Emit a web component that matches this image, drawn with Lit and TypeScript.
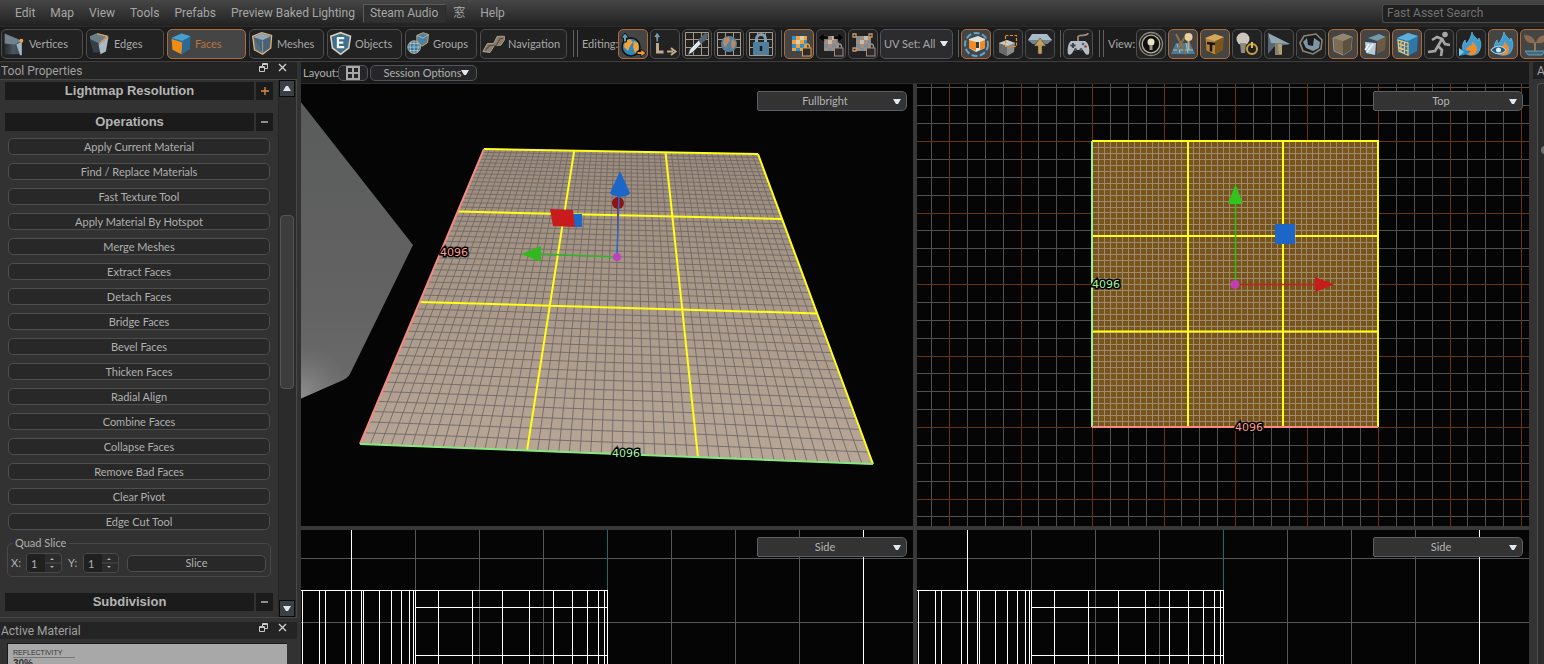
import { LitElement, html, css, svg } from "lit";
import { customElement, property } from "lit/decorators.js";

type Pt = [number, number];

/** Projective mapping from the unit square onto a quad (corners clockwise from top left). */
function projector(q: Pt[]) {
  const [[x0, y0], [x1, y1], [x2, y2], [x3, y3]] = q;
  const dx1 = x1 - x2, dx2 = x3 - x2, sx = x0 - x1 + x2 - x3;
  const dy1 = y1 - y2, dy2 = y3 - y2, sy = y0 - y1 + y2 - y3;
  const den = dx1 * dy2 - dx2 * dy1;
  const g = (sx * dy2 - dx2 * sy) / den;
  const h = (dx1 * sy - sx * dy1) / den;
  return (u: number, v: number): Pt => {
    const w = g * u + h * v + 1;
    return [
      ((x1 - x0 + g * x1) * u + (x3 - x0 + h * x3) * v + x0) / w,
      ((y1 - y0 + g * y1) * u + (y3 - y0 + h * y3) * v + y0) / w,
    ];
  };
}

const seg = (a: Pt, b: Pt) => `M${a[0].toFixed(2)} ${a[1].toFixed(2)}L${b[0].toFixed(2)} ${b[1].toFixed(2)}`;
const range = (n: number) => Array.from({ length: n }, (_, i) => i);

const cube = (left: string, right: string, top: string, edge: string) => svg`
  <path d="M5 9L15 5l9 3-1 13-8 5-9-4z" fill=${left} stroke=${edge} stroke-width="1"/>
  <path d="M15 12l9-4-1 13-8 5z" fill=${right}/>
  <path d="M5 9L15 5l9 3-9 4z" fill=${top}/>`;

const gridLines = svg`<path d="M3.500 3.500h23v23h-23zM11.500 3v24M19.500 3v24M3 10.500h24M3 18.500h24" fill="none" stroke="#a8988a"/>`;

const checker = (dim: boolean) => svg`
  <rect x="8" y="7" width="15" height="15" fill=${dim ? "#7a8d98" : "#2f8fd0"}/>
  <path d="M12 7h4v4h-4zM20 7h3v4h-3zM8 11h4v4H8zM16 11h4v4h-4zM12 15h4v4h-4zM20 15h3v4h-3zM8 19h4v3H8zM16 19h4v3h-4z" fill=${dim ? "#a68c78" : "#f0a23c"}/>
  <path d="M16 7h4v4h-4zM12 11h4v4h-4z" fill=${dim ? "#c0bcb4" : "#d8d0b0"}/>
  <path d="M20.500 19v-1.500a2.500 2.500 0 0 1 5 0V19" fill="none" stroke=${dim ? "#9a8f86" : "#d0a050"} stroke-width="1.300"/>
  <rect x="18.500" y="19" width="8.500" height="8" fill="#2c2a2a" stroke=${dim ? "#9a8f86" : "#d0a050"}/>`;

const flame = svg`
  <path d="M16 3c1 5 5 5 6 9l1-3c3 5 2 11-1 15-4 3-10 3-13 0-4-5-3-9 0-13l1 4c3-3 5-7 6-12z" fill="#3f9bd0" stroke="#7cc8ec" stroke-width=".600"/>
  <path d="M17 12c0 3 4 4 4 8 0 3-2 6-5 6s-6-2-6-5 3-3 4-5l1 1z" fill="#f28c28"/>`;

const icons: Record<string, unknown> = {
  vertices: svg`<defs><linearGradient id="vf"><stop offset="0" stop-color="#2b2b2b"/><stop offset=".500" stop-color="#4a5660"/><stop offset="1" stop-color="#3b4a56"/></linearGradient></defs>
    <path d="M3 5l19 7v15H3z" fill="url(#vf)"/><path d="M3 4l19 8-8 4-11-1z" fill="#71838f"/><path d="M16 16l6-3v15h-2z" fill="#9fb6c4"/><circle cx="21.500" cy="12" r="2.200" fill="#f0a050"/>`,
  edges: svg`<path d="M3 7L10 4l13 2-9 10H5z" fill="#6b7d89"/><path d="M3 10l11 5 1 10H7z" fill="#33404a"/><path d="M13 17L24 7l-3 17-6 3z" fill="#a9bac4"/><path d="M23 7L13 16M23 7L11 4" fill="none" stroke="#dfa167" stroke-width="1.500"/>`,
  faces: svg`<path d="M4 9l11-5 10 3-1 14-9 6-10-5z" fill="#2c6f9c"/><path d="M4 9l11-5 10 3-9 5z" fill="#4aa0cc"/><path d="M4 10l12 4-1 13-10-5z" fill="#f28c10"/><path d="M16 13l9-5-1 13-9 6z" fill="#2b6a94"/>`,
  meshes: svg`<path d="M3 7l10-4 11 3-1 14-9 7-9-5z" fill="#566f80" stroke="#e0b47c" stroke-width="1.500"/><path d="M4 8l10 4 9-5-1 13-8 5z" fill="#4c6272"/><path d="M4 8l9-4 10 3-9 4z" fill="#90a9b8"/><path d="M14 12v14" stroke="#8ea4b0"/>`,
  objects: svg`<path d="M3 7l11-4 11 4-2 13-9 7-9-7z" fill="#3c6f8c" stroke="#d8cdb8" stroke-width="1.800"/><path d="M18 9h-7v10h7M11 14h6" fill="none" stroke="#f2f2f2" stroke-width="2.400"/>`,
  groups: svg`<path d="M12 6l7-3 6 2-1 9-6 4-6-3z" fill="#4e82a0" stroke="#d8a870"/><path d="M12 6l7 3 6-4" fill="none" stroke="#9cc0d4"/><circle cx="9" cy="19" r="7" fill="#3c7a9c" stroke="#d8b890"/><path d="M9 12v14M2 19h14M4 15h10M4 23h10M6 13c-2 4-2 8 0 12M12 13c2 4 2 8 0 12" fill="none" stroke="#b8d0dc" stroke-width=".800"/>`,
  navigation: svg`<path d="M2 24l5-9h7l4-8h8v4l-4 6h-7l-5 8z" fill="#8a7c6c" stroke="#b3a491"/><path d="M5 22l5-5h7l4-7 4-1" fill="none" stroke="#564b40" stroke-width="1.200"/>`,
  world: svg`<circle cx="13" cy="18" r="9" fill="#2f86b8" stroke="#101010" stroke-width="1.500"/><path d="M7 12l5-2 3 3-3 4-2 5-4-4zM16 12l4 2 1 6-4 4-2-6z" fill="#f0a23c"/><path d="M7 4L3 9h2.500v4h3V9H11z" fill="#5f9fc0" stroke="#101010"/><path d="M28 24l-5-4v2.500h-4v3h4V28z" fill="#f09a30" stroke="#101010"/>`,
  local: svg`<path d="M7 3L3.500 8.500H6V13h2.500V8.500H11z" fill="#7d99aa" stroke="#111" stroke-width=".700"/><path d="M7.500 14v9h6" fill="none" stroke="#c0aa8e" stroke-width="3"/><path d="M17 22.500h6M21 19l4.500 3.500L21 26" fill="none" stroke="#c0aa8e" stroke-width="2"/>`,
  knife: svg`${gridLines}<path d="M6 26l2-6 9-9 3 3-9 9z" fill="#dfe7ec" stroke="#404a50" stroke-width=".800"/><path d="M16 11l7-7 3 1-1 5-6 5z" fill="#566570"/>`,
  gridWorld: svg`${gridLines}<circle cx="15" cy="15" r="8" fill="#55809c"/><path d="M10 9l5-1 1 4-3 3-1 4-3-4zM18 10l4 3-1 5-3 2-1-5z" fill="#b98a68"/>`,
  gridLock: svg`${gridLines}<path d="M10.500 14v-4a4.500 4.500 0 0 1 9 0v4" fill="none" stroke="#7fa0b4" stroke-width="3"/><rect x="7" y="13" width="16" height="13" rx="1" fill="#4f7f9c"/><path d="M15 17v5" stroke="#101820" stroke-width="2.500"/>`,
  texLock: checker(false),
  texScale: svg`${checker(true)}<path d="M2 8.500l6-5v3.500h4v3H8v3.500zM28 8.500l-6-5v3.500h-4v3h4v3.500z" fill="#060606" stroke="#4a4238" stroke-width=".500"/>`,
  texCorners: svg`${checker(true)}<path d="M5 5h3v3H5zM21 5h3v3h-3zM5 19h3v3H5z" fill="#161616" stroke="#c89a70" stroke-width="1.300"/>`,
  selectCube: svg`<circle cx="15.500" cy="15.500" r="11.500" fill="#3a5060" fill-opacity=".500" stroke="#62a4c4" stroke-width="2" stroke-dasharray="6 2.500"/><path d="M8 10l9-3 7 3v9l-9 4-7-4z" fill="#e2e2de"/><path d="M8 11l7 2v9l-7-3zM19 13l5-2v8l-5 2z" fill="#f28c20"/><path d="M15 13h3v6h-3z" fill="#3a3a3a"/>`,
  selectMarquee: svg`<path d="M6 14l8-3 8 3-1 9-7 4-8-4z" fill="#8c8c8c"/><path d="M6 14l8 3v10l-8-4z" fill="#6a6a6a"/><path d="M6 14l8-3 8 3-8 3z" fill="#c8c8c8"/><path d="M12.500 6.500h11v11h-11z" fill="none" stroke="#ee8c28" stroke-width="1.200" stroke-dasharray="3 1.500"/>`,
  dropArrow: svg`<path d="M3 11l4-6h15l5 6-5 4H8z" fill="#a9bbc6"/><path d="M3 11l5 4h14l5-4" fill="#6f8490"/><path d="M15 9l6 8h-4v8h-4v-8H9z" fill="#c0a060" stroke="#4b4028" stroke-width=".600"/>`,
  gamepad: svg`<path d="M15 12V8c0-3 10 0 10-4" fill="none" stroke="#a08c78" stroke-width="1.800"/><path d="M8 12h14c4 2 5 9 4 13-2 2-4 0-6-4h-9c-2 4-4 6-6 4-1-4 0-11 3-13z" fill="#b4bcc4"/><path d="M10 14v5M7.500 16.500h5" stroke="#39424a" stroke-width="1.800"/><circle cx="20" cy="15" r="1.300" fill="#3c6c90"/><circle cx="22.500" cy="17.500" r="1.300" fill="#a04030"/><circle cx="12.500" cy="20.500" r="1.500" fill="#485058"/><circle cx="18" cy="20.500" r="1.500" fill="#485058"/>`,
  bulbRing: svg`<circle cx="15" cy="15" r="11.500" fill="none" stroke="#8c8a80" stroke-width="1.300"/><circle cx="15" cy="15" r="8.800" fill="#101010" stroke="#b8b29c" stroke-width="1.300"/><circle cx="15" cy="13" r="3.500" fill="#ece2c4"/><path d="M13.500 16h3v5h-3z" fill="#9c9484"/>`,
  mapPins: svg`<path d="M3 25l5-11h14l5 11z" fill="#4a7c98"/><path d="M9 15l3 9M18 14l2 10M5 21h20" stroke="#9cc4d8" fill="none"/><path d="M8 5l10 20M16 9L9 23" stroke="#8c7048" stroke-width="2"/><circle cx="20.500" cy="8" r="4" fill="#eccf9c"/><path d="M20.500 12v9" stroke="#cfa870" stroke-width="2"/>`,
  toolCube: svg`${cube("#b5853a", "#7a5520", "#d0a860", "#4f3914")}<path d="M7 14l8 1M11 14.500v8" stroke="#17120a" stroke-width="2.500"/>`,
  bulbPower: svg`<circle cx="11" cy="10" r="6.500" fill="#c9c6bc"/><path d="M8 14h6l-1 10h-4z" fill="#8c8a84"/><circle cx="20" cy="20" r="5" fill="#202020" stroke="#c8a440" stroke-width="2"/><path d="M20 13v6" stroke="#e0bc50" stroke-width="2"/>`,
  camera: svg`<path d="M4 4l22 11-19 3z" fill="#8ca6b2"/><path d="M4 4v21l6-7 16-3-19-1z" fill="#566874"/><path d="M11 14h7v12h-7z" fill="#8a8064"/><path d="M14 15h4v10h-3z" fill="#b0a078"/>`,
  ring: svg`<path d="M4 14l4-7 12-2 6 6-1 9-8 5-10-3z" fill="#1b1b1b" stroke="#8e8474" stroke-width="1.600"/><path d="M7 13l4-4 1 7 5 1 1-8 6 4-1 6-6 3-7-3z" fill="#7d95a6"/>`,
  plainCube: cube("#7c6c56", "#5c5140", "#94866e", "#a49478"),
  paintCube: svg`<path d="M8 9l11-4 7 3-1 13-9 5-9-4z" fill="#36454f"/><path d="M8 9l11-4 7 3-9 4z" fill="#7499ac"/><path d="M17 12l9-4-1 13-8 4z" fill="#6e5a40"/><path d="M5 13l11 1-1 12-9-2z" fill="#b8ccd8"/><path d="M9 15l-4 6M13 15l-6 8" stroke="#f2f6f8" stroke-width="1.500"/>`,
  gridCube: svg`<path d="M5 9l11-5 10 3-1 15-9 5-10-4z" fill="#2c78a8"/><path d="M5 9l11-5 10 3-10 5z" fill="#5cb0dc"/><path d="M6 11l10 3v12L7 22zM9 12v11M12.500 13v12M6 14.500l10 3M6 18l10 4" fill="none" stroke="#f2c470" stroke-width="1.200"/>`,
  runner: svg`<circle cx="21" cy="5.500" r="2.800" fill="#a6a6a6"/><path d="M8 11l5-3 5 2-4 7 4 4-1 6M18 10l3 5 5 1M14 17l-3 5-7 1" fill="none" stroke="#a6a6a6" stroke-width="2.600"/>`,
  flameCone: svg`${flame}<path d="M3 20l12 2-3 3-9 2z" fill="#2c8cc4"/><path d="M3 19l5 4-5 4z" fill="#80c4e4"/>`,
  flameEye: svg`${flame}<path d="M3 21c4-5 11-5 15 0-4 5-11 5-15 0z" fill="#28566e" stroke="#a4d4ea" stroke-width="1.200"/><circle cx="10.500" cy="21" r="2.500" fill="#d8eef8"/>`,
  plant: svg`<path d="M5 22h20l-3 4H8z" fill="#3a6c84" stroke="#78acc4" stroke-width=".800"/><path d="M15 23V13" stroke="#8a8058" stroke-width="2"/><path d="M15 14C8 15 5 12 4 6c7 0 11 3 11 8zM16 14c1-5 4-8 11-8 0 6-4 9-11 8z" fill="#8c6c50"/>`,
};

const icon = (name: string) => html`<svg class="icon" viewBox="0 0 30 30" aria-hidden="true">${icons[name]}</svg>`;
const floatIcon = html`<svg class="glyph" viewBox="0 0 9 9" aria-hidden="true"><path d="M3.500 5V.500h5v5H6M3.500 1.500h5" fill="none" stroke="#c8c8c8"/><path d="M.500 3.500h5v5h-5zM.500 4.500h5" fill="none" stroke="#c8c8c8"/></svg>`;
const closeIcon = html`<svg class="glyph" viewBox="0 0 9 9" aria-hidden="true"><path d="M1 1l7 7M8 1L1 8" stroke="#d0d0d0" stroke-width="1.300"/></svg>`;
const caret = html`<svg class="caret" viewBox="0 0 8 5" aria-hidden="true"><path d="M0 0h8L5 5H3z" fill="#dfe8f0"/></svg>`;

const shared = css`
  *, *::before, *::after { box-sizing: border-box; }
  button, input, select { font: inherit; color: inherit; margin: 0; padding: 0; border-radius: 0; background: none; border: 0; outline: 0; }
  h2 { margin: 0; font: inherit; }
  svg { display: block; flex: none; }
  .caret { width: 8px; height: 5px; }
  .glyph { width: 9px; height: 9px; }
`;

@customElement("menu-bar")
class MenuBar extends LitElement {
  static styles = [shared, css`
    :host { display: block; }
    .bar { display: flex; align-items: center; height: 26px; padding-left: 8px; background: linear-gradient(#464646, #222); font: 12px/17px Roboto, "Noto Sans CJK JP", sans-serif; color: #a6a6a6; }
    .item { height: 19px; padding: 0 7px 0 6px; border: 1px solid transparent; white-space: nowrap; }
    .item.open { border-color: #5c5c5c; border-bottom-color: #2c2c2c; border-right-color: #2c2c2c; background: #303030; }
    .search { margin-left: auto; width: 162px; height: 19px; padding-left: 4px; border: 1px solid #4c4c4c; border-right: 0; border-radius: 3px 0 0 3px; background: #202020; }
    .search::placeholder { color: #707070; opacity: 1; }
  `];
  render() {
    const items = ["Edit", "Map", "View", "Tools", "Prefabs", "Preview Baked Lighting", "Steam Audio", "窓", "Help"];
    return html`<nav class="bar">
      ${items.map((t) => html`<button class="item ${t === "Steam Audio" ? "open" : ""}">${t}</button>`)}
      <input class="search" type="search" aria-label="Fast Asset Search" placeholder="Fast Asset Search" />
    </nav>`;
  }
}

@customElement("tool-bar")
class ToolBar extends LitElement {
  static styles = [shared, css`
    :host { display: block; }
    .bar { display: flex; align-items: center; gap: 2px; height: 36px; padding: 0 0 1px 1px; overflow: hidden; background: #1c1c1c; border-bottom: 1px solid #3e3e3e; border-top: 1px solid #2a2a2a; font: 11px/14px Lato, sans-serif; color: #a8a8a8; }
    .modes { display: grid; grid-template-columns: 82px 78px 79px 75px 75px 72px 87px; gap: 3px; flex: none; }
    .btn { display: flex; align-items: center; justify-content: center; height: 30px; border: 1px solid #4e4e50; border-radius: 5px; background: #222; flex: none; }
    .btn.on { background: #454545; border-color: #b06a36; }
    .mode { justify-content: flex-start; }
    .mode.on { color: #b87440; }
    .mode .icon { width: 27px; height: 27px; }
    .tool { width: 30px; }
    .tool .icon { width: 30px; height: 30px; }
    .handle { width: 5px; height: 27px; margin: 0 2px 0 4px; border: solid #606060; border-width: 0 1px; flex: none; }
    .sep { width: 1px; height: 27px; margin-left: 3px; background: #606060; flex: none; }
    .label { width: 34px; flex: none; }
    .label.short { width: 26px; }
    .uv { position: relative; display: flex; align-items: center; width: 73px; height: 30px; border: 1px solid #50545c; border-radius: 5px; background: #2c2c2e; flex: none; }
    .uv select { appearance: none; width: 100%; height: 100%; padding-left: 3px; }
    .uv .caret { position: absolute; right: 4px; pointer-events: none; }
  `];
  tools(names: string[], on: string[]) {
    return names.map((n) => n === "|" ? html`<span class="sep"></span>`
      : html`<button class="btn tool ${on.includes(n) ? "on" : ""}" aria-label=${n}>${icon(n)}</button>`);
  }
  render() {
    const modes = ["Vertices", "Edges", "Faces", "Meshes", "Objects", "Groups", "Navigation"];
    return html`<div class="bar">
      <div class="modes">${modes.map((m) => html`<button class="btn mode ${m === "Faces" ? "on" : ""}">${icon(m.toLowerCase())}${m}</button>`)}</div>
      <span class="handle"></span><span class="label">Editing:</span>
      ${this.tools(["world", "local", "knife", "gridWorld", "gridLock", "|", "texLock", "texScale", "texCorners"], ["world", "texLock"])}
      <div class="uv"><select aria-label="UV Set"><option>UV Set: All</option></select>${caret}</div>
      ${this.tools(["|", "selectCube", "selectMarquee", "dropArrow", "|", "gamepad"], ["selectCube"])}
      <span class="handle"></span><span class="label short">View:</span>
      ${this.tools(
        ["bulbRing", "mapPins", "toolCube", "bulbPower", "camera", "ring", "plainCube", "paintCube", "gridCube", "runner", "flameCone", "flameEye", "plant"],
        ["mapPins", "toolCube", "plainCube", "paintCube", "gridCube", "flameEye", "plant"])}
    </div>`;
  }
}

@customElement("tool-properties")
class ToolProperties extends LitElement {
  static styles = [shared, css`
    :host { display: flex; flex-direction: column; min-height: 0; background: #323232; font: 11px/14px Lato, sans-serif; color: #b0b0b0; }
    .title { display: flex; align-items: center; gap: 10px; height: 17px; margin-right: 4px; padding: 0 10px 0 1px; background: #242424; font: 12px/18px Roboto, sans-serif; color: #a0a0a0; flex: none; }
    .title h2 { flex: 1; }
    .title button { height: 9px; margin-top: -6px; }
    .dock { display: flex; flex: 1; min-height: 0; margin: 0 4px 4px 0; border: solid #484848; border-width: 1px 1px 1px 0; }
    .scroll { flex: 1; min-width: 0; overflow: hidden; padding: 2px 5px 0 5px; }
    .head { display: grid; grid-template-columns: 1fr 17px; gap: 2px; height: 18px; margin-bottom: 13px; font: bold 13px/18px "Liberation Sans", sans-serif; color: #b4b4b4; text-align: center; }
    .head h2, .head button { background: #1b1b1b; }
    .head button { display: grid; place-items: center; }
    .head.tight { margin-bottom: 7px; }
    .ops { display: grid; gap: 8px; padding: 0 3px; }
    .op { height: 17px; border: 1px solid #4e4e4e; border-radius: 5px; background: #282828; line-height: 14px; }
    .slice { display: flex; align-items: center; height: 41px; margin: 6px 2px 16px; padding: 0 4px 0 3px; border: 1px solid #484848; border-radius: 5px; min-width: 0; }
    .slice legend { margin-left: 1px; padding: 0 3px; line-height: 14px; }
    .slice label { width: 15px; }
    .spin { display: grid; grid-template-columns: 18px 1fr; width: 36px; height: 20px; margin-right: 6px; border: 1px solid #4a4a4a; border-radius: 4px; background: #2c2c2c; overflow: hidden; }
    .spin input { width: 18px; height: 18px; padding-left: 4px; background: #202020; }
    .spin svg { width: 16px; height: 18px; }
    .slice .op { flex: 1; margin-left: 2px; }
    .bar { display: flex; flex-direction: column; width: 18px; flex: none; padding-right: 1px; background: #2b2b2b; border-left: 1px solid #262626; }
    .bar button { display: grid; place-items: center; height: 17px; border: 1px solid #0a0a0a; background: #3c3f43; }
    .above { flex: 118; } .thumb { flex: 173; margin: 0 1px; border: 1px solid #555; border-radius: 4px; background: #3c3c3c; } .below { flex: 211; }
    .material { height: 42px; flex: none; }
    .preview { height: 21px; margin: 4px 14px 0 7px; padding: 4px 5px 0; background: #a8a8a8; border: solid #1a1a1a; border-width: 1px 0 0 1px; overflow: hidden; font: bold 10px/10px "Liberation Sans", sans-serif; color: #333; }
    .cap { width: 62px; border-bottom: 1px solid #777; font-size: 7px; line-height: 9px; margin-bottom: 1px; font-weight: normal; }
  `];
  dockTitle(t: string) {
    return html`<div class="title"><h2>${t}</h2><button aria-label="Float">${floatIcon}</button><button aria-label="Close">${closeIcon}</button></div>`;
  }
  head(t: string, open: boolean) {
    return html`<div class="head ${t === "Operations" ? "tight" : ""}"><h2>${t}</h2><button aria-label="Toggle ${t}">
      <svg width="8" height="8" viewBox="0 0 8 8"><path d=${open ? "M0 4h7" : "M0 4h8M4 0v8"} stroke=${open ? "#d0d0d0" : "#e08c48"} stroke-width="1.300"/></svg></button></div>`;
  }
  spin(id: string) {
    return html`<label for=${id}>${id}:</label><span class="spin"><input id=${id} type="text" value="1" />
      <svg viewBox="0 0 16 18"><path d="M0 9h16" stroke="#4a4a4a"/><path d="M5 6h4L7 4zM5 12h4l-2 2z" fill="#b0b0b0"/></svg></span>`;
  }
  render() {
    const ops = ["Apply Current Material", "Find / Replace Materials", "Fast Texture Tool", "Apply Material By Hotspot", "Merge Meshes", "Extract Faces", "Detach Faces", "Bridge Faces", "Bevel Faces", "Thicken Faces", "Radial Align", "Combine Faces", "Collapse Faces", "Remove Bad Faces", "Clear Pivot", "Edge Cut Tool"];
    return html`${this.dockTitle("Tool Properties")}
      <div class="dock">
        <div class="scroll">
          ${this.head("Lightmap Resolution", false)}${this.head("Operations", true)}
          <div class="ops">${ops.map((o) => html`<button class="op">${o}</button>`)}</div>
          <fieldset class="slice"><legend>Quad Slice</legend>${this.spin("X")}${this.spin("Y")}<button class="op">Slice</button></fieldset>
          ${this.head("Subdivision", true)}
        </div>
        <div class="bar">
          <button aria-label="Scroll up"><svg width="8" height="5" viewBox="0 0 8 5"><path d="M0 5h8L5 0H3z" fill="#dfe8f0"/></svg></button>
          <span class="above"></span><span class="thumb"></span><span class="below"></span>
          <button aria-label="Scroll down">${caret}</button>
        </div>
      </div>
      <div class="material">${this.dockTitle("Active Material")}
        <div class="preview"><div class="cap">REFLECTIVITY</div>30%</div>
      </div>`;
  }
}

@customElement("view-port")
class ViewPort extends LitElement {
  @property() mode = "Side";
  static styles = [shared, css`
    :host { position: relative; display: block; min-width: 0; min-height: 0; overflow: hidden; background: #050505; }
    .scene { width: 100%; height: 100%; }
    .crisp { shape-rendering: crispEdges; }
    .combo { position: absolute; top: 7px; right: 6px; display: flex; align-items: center; width: 150px; height: 20px; border: 1px solid #5a5e66; border-radius: 2px 5px 5px 2px; background: #333; font: 11px/14px Lato, sans-serif; color: #b4b4b4; }
    .combo select { appearance: none; width: 100%; height: 18px; padding-right: 14px; text-align: center; text-align-last: center; }
    .combo .caret { position: absolute; right: 5px; pointer-events: none; }
    .dim { font: 11px "DejaVu Sans", sans-serif; paint-order: stroke; stroke: #000; stroke-width: 3px; }
    .pink { fill: #ff9c94; } .green { fill: #a6f5a0; }
  `];
  perspective() {
    const q: Pt[] = [[484, 149], [758, 154], [873, 464], [360, 444]];
    const p = projector(q);
    const n = 48;
    const fine = range(n + 1).map((i) => seg(p(i / n, 0), p(i / n, 1)) + seg(p(0, i / n), p(1, i / n))).join("");
    const bold = [1 / 3, 2 / 3].map((t) => seg(p(t, 0), p(t, 1)) + seg(p(0, t), p(1, t))).join("");
    return svg`
      <defs>
        <linearGradient id="plane" x1="0" y1="0" x2="0" y2="1"><stop offset="0" stop-color="#9c8b7b"/><stop offset="1" stop-color="#b8a696"/></linearGradient>
        <linearGradient id="wall" x1="0" y1="0" x2="0" y2="1"><stop offset="0" stop-color="#5a5c5b"/><stop offset=".700" stop-color="#626362"/><stop offset="1" stop-color="#6c6c6c"/></linearGradient>
        <radialGradient id="glow" cx="301" cy="395" r="50" gradientUnits="userSpaceOnUse"><stop offset="0" stop-color="#aaa" stop-opacity=".550"/><stop offset="1" stop-color="#888" stop-opacity="0"/></radialGradient>
      </defs>
      <path d="M300 101L413 245L350 374Q347 379 341 381L300 399z" fill="url(#wall)"/>
      <path d="M300 320L380 315L350 374Q347 379 341 381L300 399z" fill="url(#glow)"/>
      <path d="M${q.join("L")}z" fill="url(#plane)"/>
      <path d=${fine} stroke="#6f6a68" stroke-width=".900" fill="none"/>
      <path d=${bold + seg(q[0], q[1]) + seg(q[1], q[2])} stroke="#ffff18" stroke-width="2" fill="none"/>
      <path d=${seg(q[0], q[3])} stroke="#f58a84" stroke-width="2"/>
      <path d=${seg(q[3], q[2])} stroke="#88e880" stroke-width="2"/>
      <path d="M541 254l76 3" stroke="#2cb828" stroke-width="1.500"/><path d="M521 254l20-8v16z" fill="#30b81c"/>
      <path d="M572 214h10v13h-10z" fill="#1c66c8"/><path d="M550 209l23 1 2 17-22-1z" fill="#c81c1c"/>
      <circle cx="618" cy="203" r="6" fill="#8e1414"/><path d="M617.500 209v30" stroke="#c82020"/>
      <path d="M619 196l-2 60" stroke="#2468c4" stroke-width="1.500"/><path d="M620 171l10 22c-3 5-16 5-20 0z" fill="#1c66c8"/>
      <circle cx="617" cy="257" r="4" fill="#c040c0"/>
      <text class="dim pink" x="440" y="256">4096</text><text class="dim green" x="612" y="457">4096</text>`;
  }
  top() {
    const step = 17.875;
    const xs = range(37).map((i) => i - 18), ys = range(27).map((i) => i - 12);
    const px = (v: number) => Math.round(v) + 0.5;
    const grid = (major: boolean) =>
      xs.filter((i) => (i % 4 === 0) === major).map((i) => `M${px(1235 + i * step)} 84V526`).join("") +
      ys.filter((i) => (i % 4 === 0) === major).map((i) => `M917 ${px(284 + i * step)}H1529`).join("");
    const fine = range(48).map((i) => `M${px(1092 + i * 5.958)} 141V427M1092 ${px(141 + i * 5.958)}H1378`).join("");
    return svg`
      <g class="crisp" fill="none">
        <path d=${grid(false)} stroke="#505050"/><path d=${grid(true)} stroke="#6a3410"/>
        <path d="M1092 141h286v286h-286z" fill="#785418"/><path d=${fine} stroke="#9c8a74"/>
      </g>
      <path d="M1092 141h286v286M1188 141v286M1283 141v286M1092 236h286M1092 331.500h286" fill="none" stroke="#ffff18" stroke-width="2"/>
      <path d="M1092 141v286" stroke="#98f090" stroke-width="2"/><path d="M1092 427h286" stroke="#f88c84" stroke-width="2"/>
      <path d="M1235.500 203v82" stroke="#2cc01c" stroke-width="1.500"/><path d="M1235.500 184l7.500 20h-15z" fill="#30c41c"/>
      <path d="M1235 284.500h81" stroke="#c02020" stroke-width="1.500"/><path d="M1334 284.500l-19-7.500v15z" fill="#c81c1c"/>
      <circle cx="1235" cy="284.500" r="4.500" fill="#c040b0"/><path d="M1275 224h20v20h-20z" fill="#1c66c8"/>
      <text class="dim green" x="1092" y="288">4096</text><text class="dim pink" x="1235" y="431">4096</text>`;
  }
  side() {
    const ribs = [302, 319, 325, 345, 351, 361, 363, 379, 391, 401, 409, 413, 415, 438, 472, 502, 529, 553, 572, 587, 598, 604, 607];
    const lines = [415, 479, 543, 671, 735, 799].map((x) => `M${x + 0.5} 530V664`).join("");
    return svg`<g class="crisp" fill="none">
      <path d="${lines}M301 558.500H913M301 622.500H913" stroke="#565656"/>
      <path d="M607.500 530V664" stroke="#1f6a68"/>
      <path d="M351.500 530V664M863.500 530V664M301 590.500H608M415 607.500H608M415 655.500H608${ribs.map((x) => `M${x + 0.5} 590V664`).join("")}" stroke="#fff"/>
    </g>`;
  }
  render() {
    const box: Record<string, string> = { Fullbright: "301 84 612 442", Top: "917 84 612 442", Side: "301 530 612 134" };
    const scene = this.mode === "Top" ? this.top() : this.mode === "Side" ? this.side() : this.perspective();
    return html`<svg class="scene" viewBox=${box[this.mode]} preserveAspectRatio="xMidYMin slice">${scene}</svg>
      <div class="combo"><select aria-label="View mode"><option>${this.mode}</option></select>${caret}</div>`;
  }
}

@customElement("app-root")
class AppRoot extends LitElement {
  static styles = [shared, css`
    :host { display: flex; flex-direction: column; height: 100vh; overflow: hidden; background: #1a1a1a; }
    .body { display: grid; grid-template-columns: 301px minmax(0, 1fr) 15px; flex: 1; min-height: 0; }
    .main { display: flex; flex-direction: column; min-width: 0; min-height: 0; }
    .layout { display: flex; align-items: center; gap: 2px; height: 22px; padding: 0 2px; background: #1a1a1a; border-bottom: 1px solid #2c2c2c; font: 11px/14px Lato, sans-serif; color: #b0b0b0; flex: none; }
    .label { width: 33px; white-space: nowrap; }
    .small { display: flex; align-items: center; justify-content: center; height: 16px; border: 1px solid #50545c; border-radius: 5px; background: #262628; }
    .grid { width: 30px; }
    .session { width: 107px; padding-left: 6px; }
    .views { display: grid; flex: 1; min-height: 0; grid-template-columns: 1fr 1fr; grid-template-rows: minmax(0, 442fr) minmax(0, 134fr); gap: 4px; background: #383838; }
    .right { display: flex; flex-direction: column; padding-left: 4px; background: #333; font: 12px/18px Roboto, sans-serif; color: #a0a0a0; overflow: hidden; }
    .right h2 { padding-left: 4px; background: #202020; height: 17px; }
    .well { flex: 1; margin: 4px 0 0 4px; border: solid #505050; border-width: 1px 0 0 1px; border-radius: 4px 0 0 0; padding-top: 62px; background: #2c2c2c; }
    .knob { width: 8px; height: 8px; margin-left: 3px; border-radius: 4px; background: #707070; }
  `];
  render() {
    return html`<menu-bar></menu-bar><tool-bar></tool-bar>
      <div class="body">
        <tool-properties></tool-properties>
        <main class="main">
          <div class="layout"><span class="label">Layout:</span>
            <button class="small grid" aria-label="Four views"><svg width="14" height="14" viewBox="0 0 14 14"><path d="M0 0h14v14H0z" fill="#a8a8a8"/><path d="M2 2h4v4H2zM8 2h4v4H8zM2 8h4v4H2zM8 8h4v4H8z" fill="#242424"/></svg></button>
            <button class="small session">Session Options${caret}</button>
          </div>
          <div class="views">${["Fullbright", "Top", "Side", "Side"].map((m) => html`<view-port .mode=${m}></view-port>`)}</div>
        </main>
        <aside class="right"><h2>A</h2><div class="well"><div class="knob"></div></div></aside>
      </div>`;
  }
}
